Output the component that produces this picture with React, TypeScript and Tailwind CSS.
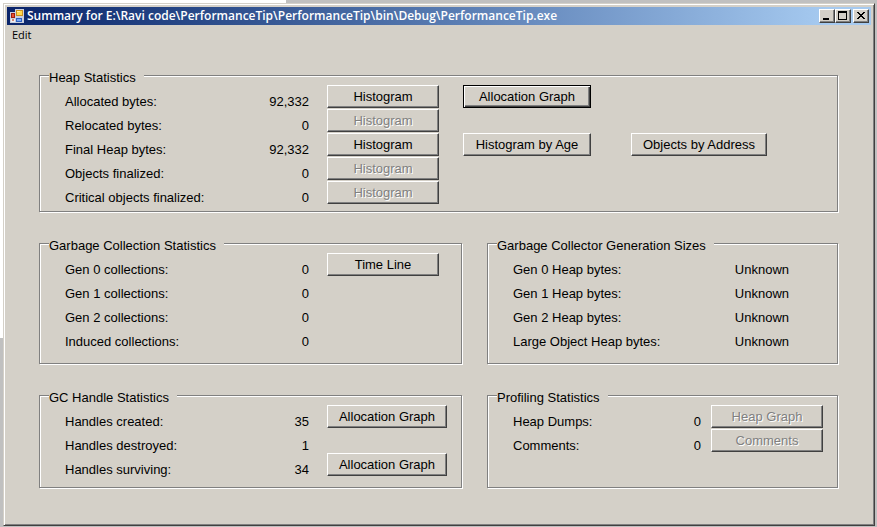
import React from 'react';

interface StatButton {
  text: string;
  size: string;
  disabled?: boolean;
  isDefault?: boolean;
}

interface Stat {
  label: string;
  value: string;
  buttons?: StatButton[];
}

interface StatGroupProps {
  title: string;
  stats: Stat[];
  labelClass: string;
  valueClass: string;
  className?: string;
}

const heapStats: Stat[] = [
  {
    label: 'Allocated bytes:',
    value: '92,332',
    buttons: [
      { text: 'Histogram', size: 'w-28' },
      { text: 'Allocation Graph', size: 'w-32 ml-6', isDefault: true },
    ],
  },
  { label: 'Relocated bytes:', value: '0', buttons: [{ text: 'Histogram', size: 'w-28', disabled: true }] },
  {
    label: 'Final Heap bytes:',
    value: '92,332',
    buttons: [
      { text: 'Histogram', size: 'w-28' },
      { text: 'Histogram by Age', size: 'w-32 ml-6' },
      { text: 'Objects by Address', size: 'w-34 ml-10' },
    ],
  },
  { label: 'Objects finalized:', value: '0', buttons: [{ text: 'Histogram', size: 'w-28', disabled: true }] },
  { label: 'Critical objects finalized:', value: '0', buttons: [{ text: 'Histogram', size: 'w-28', disabled: true }] },
];

const gcStats: Stat[] = [
  { label: 'Gen 0 collections:', value: '0', buttons: [{ text: 'Time Line', size: 'w-28' }] },
  { label: 'Gen 1 collections:', value: '0' },
  { label: 'Gen 2 collections:', value: '0' },
  { label: 'Induced collections:', value: '0' },
];

const generationSizes: Stat[] = [
  { label: 'Gen 0 Heap bytes:', value: 'Unknown' },
  { label: 'Gen 1 Heap bytes:', value: 'Unknown' },
  { label: 'Gen 2 Heap bytes:', value: 'Unknown' },
  { label: 'Large Object Heap bytes:', value: 'Unknown' },
];

const handleStats: Stat[] = [
  { label: 'Handles created:', value: '35', buttons: [{ text: 'Allocation Graph', size: 'w-30' }] },
  { label: 'Handles destroyed:', value: '1' },
  { label: 'Handles surviving:', value: '34', buttons: [{ text: 'Allocation Graph', size: 'w-30' }] },
];

const profilingStats: Stat[] = [
  { label: 'Heap Dumps:', value: '0', buttons: [{ text: 'Heap Graph', size: 'w-28', disabled: true }] },
  { label: 'Comments:', value: '0', buttons: [{ text: 'Comments', size: 'w-28', disabled: true }] },
];

const raised = 'border border-t-white border-l-white border-r-[#404040] border-b-[#404040] shadow-[inset_-1px_-1px_0_#808080]';
const raisedDefault = 'border border-black shadow-[inset_1px_1px_0_#fff,inset_-1px_-1px_0_#404040,inset_-2px_-2px_0_#808080]';

const PushButton: React.FC<StatButton> = ({ text, size, disabled, isDefault }) => (
  <button
    type="button"
    disabled={disabled}
    className={`${size} ${isDefault ? raisedDefault : raised} h-[23px] shrink-0 leading-4 whitespace-nowrap disabled:text-[#808080] disabled:[text-shadow:1px_1px_0_#fff]`}
  >
    {text}
  </button>
);

const StatGroup: React.FC<StatGroupProps> = ({ title, stats, labelClass, valueClass, className = '' }) => (
  <fieldset
    className={`min-w-0 border border-[#808080] pl-[25px] shadow-[1px_1px_0_#fff,inset_1px_1px_0_#fff] ${className}`}
  >
    <legend className="-ml-4 bg-[#d4d0c8] pt-1.5 pr-2 leading-4">{title}</legend>
    <div className="-mt-px">
      {stats.map(stat => (
        <div key={stat.label} className="flex h-6 items-start">
          <span className={`${labelClass} shrink-0 pt-2 leading-[18px] whitespace-nowrap`}>{stat.label}</span>
          <span className={`${valueClass} shrink-0 pt-2 text-right leading-[18px]`}>{stat.value}</span>
          {stat.buttons?.map(button => <PushButton key={button.text} {...button} />)}
        </div>
      ))}
    </div>
  </fieldset>
);

// Small caption buttons, drawn on a 14x12 pixel grid
const CaptionButton: React.FC<{ name: string; d: string; className?: string }> = ({ name, d, className = '' }) => (
  <button type="button" aria-label={name} className={`${raised} ${className} h-3.5 w-4 bg-[#d4d0c8]`}>
    <svg viewBox="0 0 14 12" className="block h-3 w-3.5" shapeRendering="crispEdges">
      <path d={d} fill="#000" />
    </svg>
  </button>
);

const AppIcon = () => (
  <svg viewBox="0 0 16 16" className="h-4 w-4 shrink-0" shapeRendering="crispEdges">
    <path d="M1 4h5V1h9v14H1z" fill="#c8cede" />
    <path d="M2 5h4v5H2z" fill="#a01c10" />
    <path d="M3 6h2v3H3z" fill="#e85030" />
    <path d="M7 2h7v6H7z" fill="#c89020" />
    <path d="M8 3h5v4H8z" fill="#ffd84c" />
    <path d="M8 3h3v1H8z" fill="#fff0a8" />
    <path d="M2 11h4v3H2z" fill="#f0f0f4" />
    <path d="M3 11h2v2H3z" fill="#d08878" />
    <path d="M7 10h6v4H7z" fill="#3060c0" />
    <path d="M8 11h4v2H8z" fill="#78a8f4" />
  </svg>
);

const TitleBar = () => (
  <header className="flex h-[18px] items-center bg-linear-to-r from-[#0a246a] to-[#a6caf0] to-95% pr-0.5 pl-0.5">
    <AppIcon />
    <h1 className="ml-0.5 flex-1 truncate font-['Open_Sans',sans-serif] text-[12px] leading-[18px] font-semibold text-white">
      Summary for E:\Ravi code\PerformanceTip\PerformanceTip\bin\Debug\PerformanceTip.exe
    </h1>
    <CaptionButton name="Minimize" d="M3 8h6v2H3z" />
    <CaptionButton name="Maximize" d="M2 1h9v9H2zM3 3v6h7V3z" />
    <CaptionButton
      name="Close"
      className="ml-0.5"
      d="M3 2h2v1h1v1h2v-1h1v-1h2v1h-1v1h-1v1h-1v1h1v1h1v1h1v1h-2v-1h-1v-1h-2v1h-1v1h-2v-1h1v-1h1v-1h1v-1h-1v-1h-1v-1h-1z"
    />
  </header>
);

const App = () => {
  return (
    <div className="flex min-h-screen flex-col bg-[#c0c0c0] bg-[linear-gradient(#fff,#fff)] bg-[length:286px_338px] bg-no-repeat pt-[3px] pr-0.5 pb-px pl-[3px] font-['Liberation_Sans',Arial,sans-serif] text-[13px] text-black">
      <div className="flex flex-1 flex-col border border-t-[#d4d0c8] border-r-[#404040] border-b-[#404040] border-l-[#d4d0c8] bg-[#d4d0c8] p-[3px] shadow-[inset_1px_1px_0_#fff,inset_-1px_-1px_0_#808080]">
        <TitleBar />
        <nav className="flex h-5 items-center">
          <button type="button" className="px-[5px] font-['Open_Sans',sans-serif] text-[11px] leading-5">
            Edit
          </button>
        </nav>
        <main className="flex flex-col gap-5 pt-[19px] pr-[33px] pl-8">
          <StatGroup title="Heap Statistics" stats={heapStats} labelClass="w-48" valueClass="w-13 mr-[18px]" className="pb-1.5" />
          <div className="grid grid-cols-[423fr_351fr] gap-x-[25px] gap-y-5">
            <StatGroup title="Garbage Collection Statistics" stats={gcStats} labelClass="w-48" valueClass="w-13 mr-[18px]" className="pb-3.5" />
            <StatGroup title="Garbage Collector Generation Sizes" stats={generationSizes} labelClass="w-48" valueClass="w-21" />
            <StatGroup title="GC Handle Statistics" stats={handleStats} labelClass="w-48" valueClass="w-13 mr-[18px]" className="pb-2.5" />
            <StatGroup title="Profiling Statistics" stats={profilingStats} labelClass="w-36" valueClass="w-11 mr-2.5" />
          </div>
        </main>
      </div>
    </div>
  );
};

export default App;
